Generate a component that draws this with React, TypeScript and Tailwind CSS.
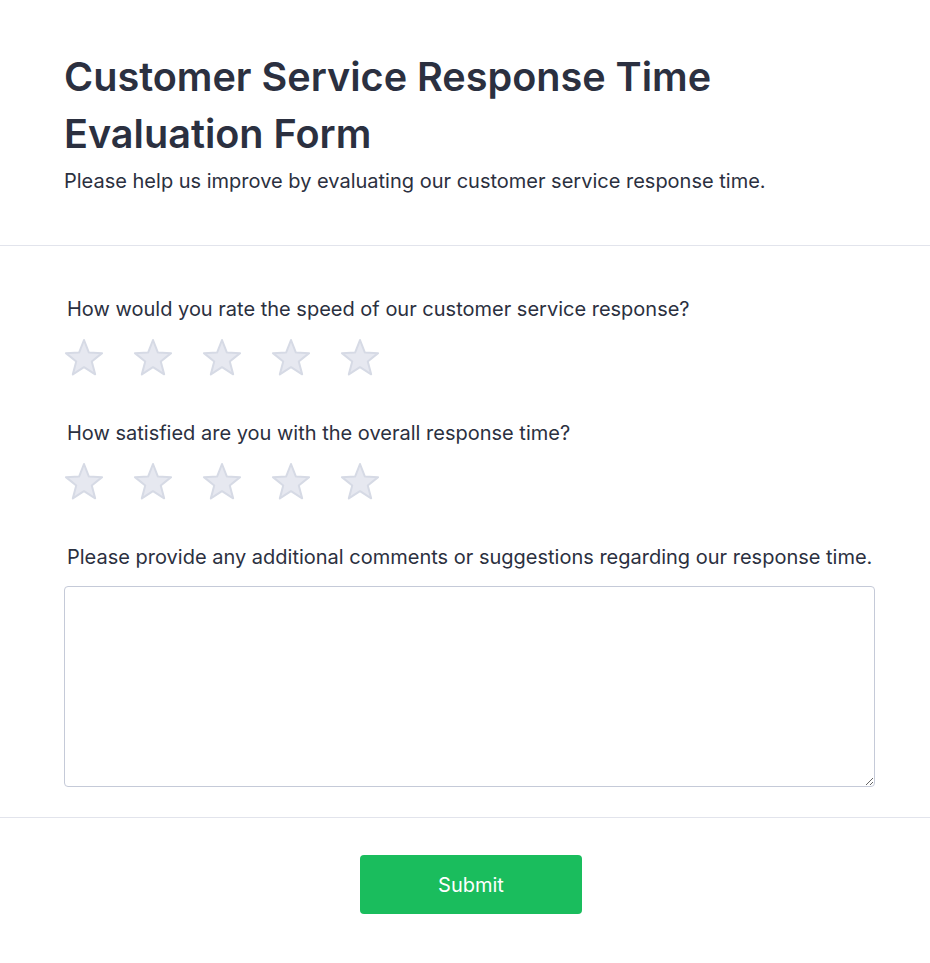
import { useState } from "react";

function Star({ filled }: { filled: boolean }) {
  return (
    <svg width="44" height="40" viewBox="0 0 44 40" className="block">
      <path
        d="M22 2L26.8 14.39L40.07 15.13L29.77 23.52L33.17 36.37L22 29.17L10.83 36.37L14.23 23.52L3.93 15.13L17.2 14.39Z"
        fill={filled ? "#facc15" : "#e6e8f0"}
        stroke={filled ? "#eab308" : "#d6dae5"}
        strokeWidth="2"
        strokeLinejoin="round"
      />
    </svg>
  );
}

function Rating({ value, onChange }: { value: number; onChange: (v: number) => void }) {
  return (
    <div className="flex gap-[25px] ml-[62px] mt-[14px]">
      {[1, 2, 3, 4, 5].map((n) => (
        <button key={n} type="button" onClick={() => onChange(n)} className="cursor-pointer">
          <Star filled={n <= value} />
        </button>
      ))}
    </div>
  );
}

export default function App() {
  const [speed, setSpeed] = useState(0);
  const [satisfied, setSatisfied] = useState(0);
  const [comment, setComment] = useState("");

  return (
    <div className="bg-white min-h-screen text-[#2b3040] font-['Inter',sans-serif]">
      {/* header */}
      <div className="px-16 pt-[49px] pb-[49px] border-b border-[#e2e4ec]">
        <h1 className="text-[39.6px] leading-[57px] font-semibold">
          Customer Service Response Time
          <br />
          Evaluation Form
        </h1>
        <p className="text-[20px] leading-[30px] mt-[3px]">
          Please help us improve by evaluating our customer service response time.
        </p>
      </div>

      {/* questions */}
      <form className="pt-[48px] pb-[30px] border-b border-[#e2e4ec]">
        <label className="block ml-[67px] text-[20px] leading-[30px]">
          How would you rate the speed of our customer service response?
        </label>
        <Rating value={speed} onChange={setSpeed} />

        <label className="block ml-[67px] mt-[40px] text-[20px] leading-[30px]">
          How satisfied are you with the overall response time?
        </label>
        <Rating value={satisfied} onChange={setSatisfied} />

        <label className="block ml-[67px] mt-[40px] text-[20px] leading-[30px]">
          Please provide any additional comments or suggestions regarding our response time.
        </label>
        <textarea
          value={comment}
          onChange={(e) => setComment(e.target.value)}
          className="block ml-16 mt-[14px] w-[811px] h-[201px] border border-[#c5cad8] rounded-[4px] p-2 outline-none"
        />
      </form>

      <div className="flex justify-center pl-[12px] pt-[37px] pb-[50px]">
        <button
          type="button"
          className="w-[222px] h-[59px] rounded-[4px] bg-[#1abd5d] text-white text-[20px] cursor-pointer"
        >
          Submit
        </button>
      </div>
    </div>
  );
}
